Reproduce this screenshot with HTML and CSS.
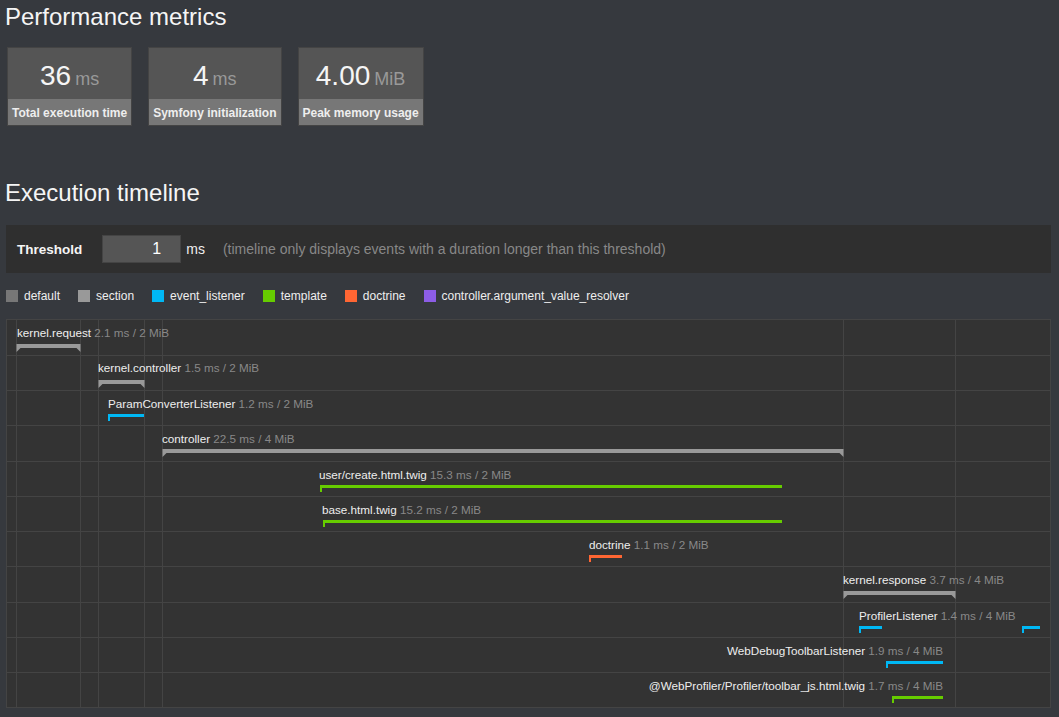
FILE: index.html
```html
<!DOCTYPE html>
<html lang="en">
<head>
<meta charset="utf-8">
<title>Performance metrics</title>
<link rel="stylesheet" href="styles.css">
</head>
<body>
<div class="page">
  <h2 class="title">Performance metrics</h2>
  <div class="metrics">
    <div class="metric">
      <div class="metric-value">36<span class="unit">ms</span></div>
      <div class="metric-label">Total execution time</div>
    </div>
    <div class="metric">
      <div class="metric-value">4<span class="unit">ms</span></div>
      <div class="metric-label">Symfony initialization</div>
    </div>
    <div class="metric">
      <div class="metric-value">4.00<span class="unit">MiB</span></div>
      <div class="metric-label">Peak memory usage</div>
    </div>
  </div>

  <h2 class="title title-timeline">Execution timeline</h2>

  <div class="threshold">
    <span class="threshold-label">Threshold</span>
    <span class="threshold-input">1</span>
    <span class="threshold-unit">ms</span>
    <span class="threshold-help">(timeline only displays events with a duration longer than this threshold)</span>
  </div>

  <ul class="legend">
    <li><span class="swatch sw-default"></span>default</li>
    <li><span class="swatch sw-section"></span>section</li>
    <li><span class="swatch sw-listener"></span>event_listener</li>
    <li><span class="swatch sw-template"></span>template</li>
    <li><span class="swatch sw-doctrine"></span>doctrine</li>
    <li><span class="swatch sw-resolver"></span>controller.argument_value_resolver</li>
  </ul>

  <svg class="timeline" width="1045" height="390" viewBox="6 319 1045 390" xmlns="http://www.w3.org/2000/svg">
    <rect class="tl-bg" x="6.5" y="319.5" width="1044" height="388"/>
    <g class="tl-grid">
      <line x1="16.5" y1="320" x2="16.5" y2="707"/>
      <line x1="80.5" y1="320" x2="80.5" y2="707"/>
      <line x1="98.5" y1="320" x2="98.5" y2="707"/>
      <line x1="144.5" y1="320" x2="144.5" y2="707"/>
      <line x1="162.5" y1="320" x2="162.5" y2="707"/>
      <line x1="843.5" y1="320" x2="843.5" y2="707"/>
      <line x1="955.5" y1="320" x2="955.5" y2="707"/>
      <line x1="7" y1="355.5" x2="1050" y2="355.5"/>
      <line x1="7" y1="390.5" x2="1050" y2="390.5"/>
      <line x1="7" y1="425.5" x2="1050" y2="425.5"/>
      <line x1="7" y1="461.5" x2="1050" y2="461.5"/>
      <line x1="7" y1="496.5" x2="1050" y2="496.5"/>
      <line x1="7" y1="531.5" x2="1050" y2="531.5"/>
      <line x1="7" y1="566.5" x2="1050" y2="566.5"/>
      <line x1="7" y1="602.5" x2="1050" y2="602.5"/>
      <line x1="7" y1="637.5" x2="1050" y2="637.5"/>
      <line x1="7" y1="672.5" x2="1050" y2="672.5"/>
    </g>

    <!-- kernel.request -->
    <text class="tl-text" x="17" y="337"><tspan class="tl-name">kernel.request</tspan> <tspan class="tl-info">2.1 ms / 2 MiB</tspan></text>
    <polygon class="bar-section" points="16.5,344 80.5,344 80.5,352 76.5,348 20.5,348 16.5,352"/>

    <!-- kernel.controller -->
    <text class="tl-text" x="98" y="372"><tspan class="tl-name">kernel.controller</tspan> <tspan class="tl-info">1.5 ms / 2 MiB</tspan></text>
    <polygon class="bar-section" points="98.5,380 144.5,380 144.5,388 140.5,384 102.5,384 98.5,388"/>

    <!-- ParamConverterListener -->
    <text class="tl-text" x="108" y="408"><tspan class="tl-name">ParamConverterListener</tspan> <tspan class="tl-info">1.2 ms / 2 MiB</tspan></text>
    <polygon class="bar-listener" points="108,414 144,414 144,417 110,417 110,421 108,421"/>

    <!-- controller -->
    <text class="tl-text" x="162" y="443"><tspan class="tl-name">controller</tspan> <tspan class="tl-info">22.5 ms / 4 MiB</tspan></text>
    <polygon class="bar-section" points="162.5,449 843.5,449 843.5,457 839.5,453 166.5,453 162.5,457"/>

    <!-- user/create.html.twig -->
    <text class="tl-text" x="319" y="479"><tspan class="tl-name">user/create.html.twig</tspan> <tspan class="tl-info">15.3 ms / 2 MiB</tspan></text>
    <polygon class="bar-template" points="320,485 782,485 782,488 322,488 322,492 320,492"/>

    <!-- base.html.twig -->
    <text class="tl-text" x="322" y="514"><tspan class="tl-name">base.html.twig</tspan> <tspan class="tl-info">15.2 ms / 2 MiB</tspan></text>
    <polygon class="bar-template" points="323,520 782,520 782,523 325,523 325,527 323,527"/>

    <!-- doctrine -->
    <text class="tl-text" x="589" y="549"><tspan class="tl-name">doctrine</tspan> <tspan class="tl-info">1.1 ms / 2 MiB</tspan></text>
    <polygon class="bar-doctrine" points="589,555 622,555 622,558 591,558 591,562 589,562"/>

    <!-- kernel.response -->
    <text class="tl-text" x="843" y="584"><tspan class="tl-name">kernel.response</tspan> <tspan class="tl-info">3.7 ms / 4 MiB</tspan></text>
    <polygon class="bar-section" points="843.5,591 955.5,591 955.5,599 951.5,595 847.5,595 843.5,599"/>

    <!-- ProfilerListener -->
    <text class="tl-text" x="859" y="620"><tspan class="tl-name">ProfilerListener</tspan> <tspan class="tl-info">1.4 ms / 4 MiB</tspan></text>
    <polygon class="bar-listener" points="859,626 882,626 882,629 861,629 861,633 859,633"/>
    <polygon class="bar-listener" points="1022,626 1040,626 1040,629 1024,629 1024,633 1022,633"/>

    <!-- WebDebugToolbarListener -->
    <text class="tl-text" x="943" y="655" text-anchor="end"><tspan class="tl-name">WebDebugToolbarListener</tspan> <tspan class="tl-info">1.9 ms / 4 MiB</tspan></text>
    <polygon class="bar-listener" points="886,661 943,661 943,664 888,664 888,668 886,668"/>

    <!-- toolbar_js -->
    <text class="tl-text" x="943" y="690" text-anchor="end"><tspan class="tl-name">@WebProfiler/Profiler/toolbar_js.html.twig</tspan> <tspan class="tl-info">1.7 ms / 4 MiB</tspan></text>
    <polygon class="bar-template" points="892,696 943,696 943,699 894,699 894,703 892,703"/>
  </svg>
</div>
</body>
</html>
```

FILE: styles.css
```css
html, body {
  margin: 0;
  padding: 0;
}

body {
  background: #36393e;
  color: #f0f0f0;
  font-family: "Liberation Sans", Arial, Helvetica, sans-serif;
}

.page {
  padding: 0 8px 0 6px;
}

.title {
  margin: 3px 0 0 -1px;
  font-size: 24px;
  line-height: 28px;
  font-weight: normal;
  color: #f5f5f5;
}

.title-timeline {
  margin-top: 53px;
}

/* metrics */
.metrics {
  display: flex;
  gap: 16px;
  margin: 16px 0 0 1px;
}

.metric {
  display: flex;
  flex-direction: column;
  border: 1px solid #444;
}

.metric-value {
  height: 49px;
  padding-top: 2px;
  line-height: 51px;
  text-align: center;
  background: #555;
  color: #f5f5f5;
  font-size: 28px;
}

.unit {
  margin-left: 4px;
  font-size: 18px;
  color: #999;
}

.metric-label {
  height: 25px;
  padding: 1px 4px 0;
  line-height: 26px;
  background: #777;
  color: #eee;
  font-size: 12px;
  font-weight: bold;
  text-align: center;
  white-space: nowrap;
}

/* threshold */
.threshold {
  display: flex;
  align-items: center;
  height: 48px;
  margin-top: 18px;
  padding-left: 11px;
  background: #2f2f2f;
}

.threshold-label {
  margin-right: 20px;
  font-size: 13.5px;
  font-weight: bold;
  color: #f5f5f5;
}

.threshold-input {
  box-sizing: border-box;
  width: 79px;
  height: 28px;
  line-height: 26px;
  padding-right: 19px;
  background: #555;
  border: 1px solid #444;
  color: #fff;
  font-size: 16px;
  text-align: right;
}

.threshold-unit {
  margin-left: 5px;
  font-size: 14px;
  color: #eee;
}

.threshold-help {
  margin-left: 18px;
  font-size: 14px;
  color: #888;
}

/* legend */
.legend {
  display: flex;
  list-style: none;
  margin: 16px 0 0;
  padding: 0;
  font-size: 12px;
  line-height: 14px;
  color: #eee;
}

.legend li {
  display: flex;
  align-items: center;
  margin-right: 18px;
}

.swatch {
  width: 12px;
  height: 12px;
  margin-right: 6px;
}

.sw-default { background: #777; }
.sw-section { background: #999; }
.sw-listener { background: #00b8f5; }
.sw-template { background: #66cc00; }
.sw-doctrine { background: #ff6633; }
.sw-resolver { background: #8c5de6; }

/* timeline */
.timeline {
  display: block;
  margin-top: 16px;
}

.tl-bg {
  fill: #333;
  stroke: #444;
  stroke-width: 1;
}

.tl-grid line {
  stroke: #444;
  stroke-width: 1;
}

.tl-text {
  font-family: "Liberation Sans", Arial, Helvetica, sans-serif;
  font-size: 11.7px;
}

.tl-name { fill: #eee; }
.tl-info { fill: #888; }

.bar-section { fill: #999; }
.bar-listener { fill: #00b8f5; }
.bar-template { fill: #66cc00; }
.bar-doctrine { fill: #ff6633; }
```
